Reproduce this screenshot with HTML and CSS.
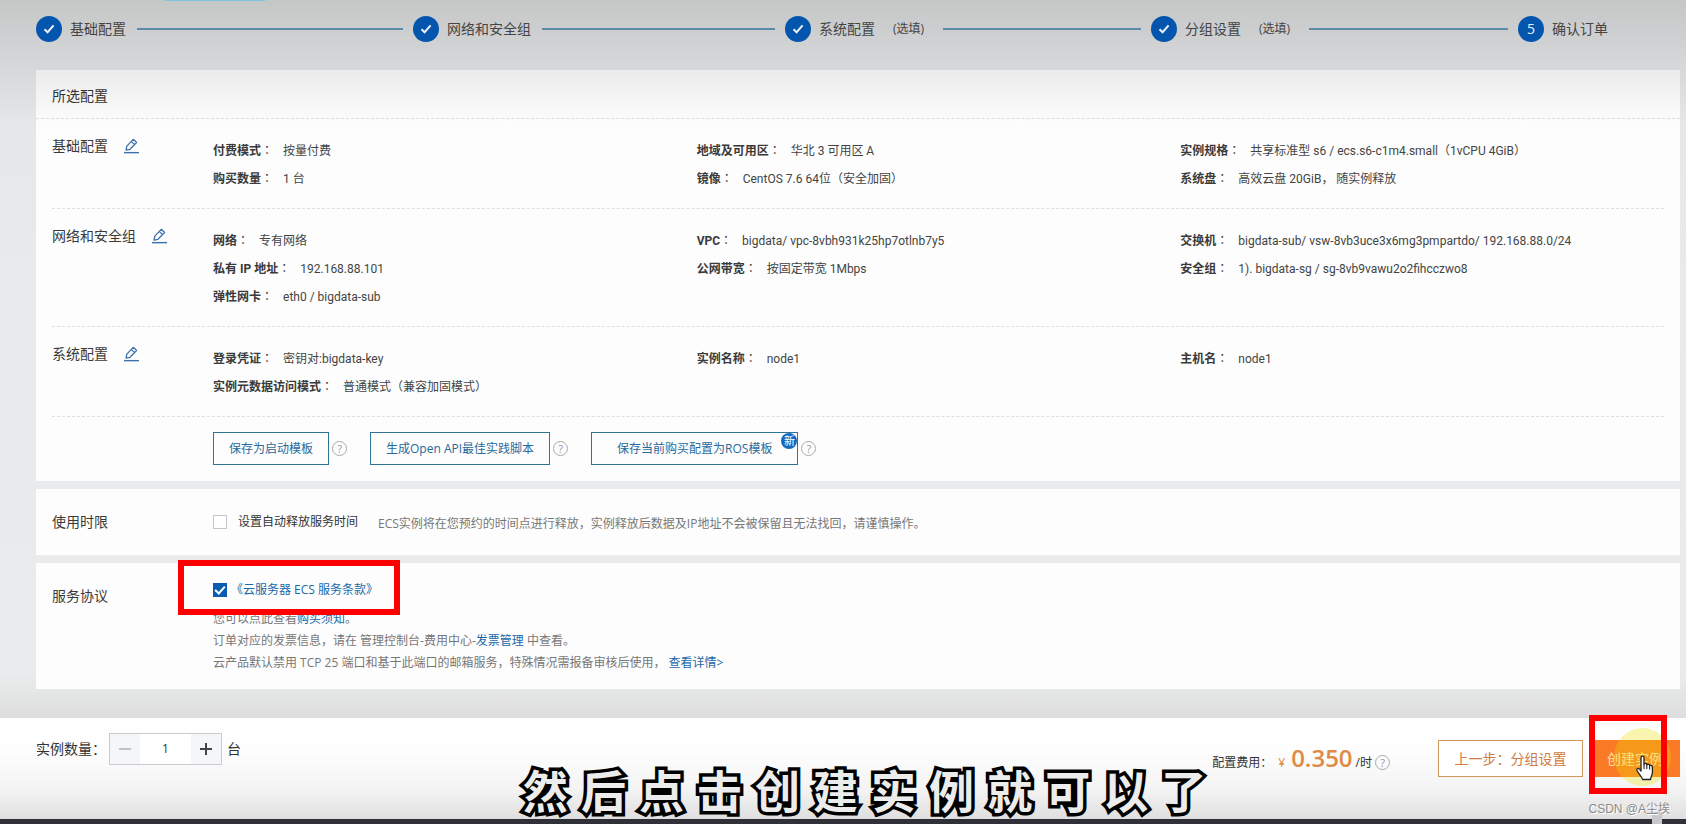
FILE: index.html
```html
<!DOCTYPE html>
<html lang="zh-CN">
<head>
<meta charset="utf-8">
<meta name="viewport" content="width=device-width, initial-scale=1">
<title>确认订单</title>
<link rel="stylesheet" href="styles.css">
</head>
<body>
<svg class="sprite" aria-hidden="true">
  <symbol id="check" viewBox="0 0 12 12"><path d="M1.5 6.2 4.6 9.2 10.6 2.4" fill="none" stroke="currentColor" stroke-width="2"/></symbol>
  <symbol id="pen" viewBox="0 0 16 17"><path d="M2.2 12.8 3 8.6 9.9 1.4 13.4 4.8 6.4 12 2.2 12.8ZM7.8 3.6 11.2 7" fill="none" stroke="currentColor" stroke-width="1.4" stroke-linejoin="round"/><path d="M0 15.6H16" stroke="currentColor" stroke-width="1.5"/></symbol>
</svg>
<div class="tab-edge"></div>

<ol class="steps">
  <li class="step"><span class="dot"><svg class="check"><use href="#check"/></svg></span><span class="step-name">基础配置</span><span class="rail"></span></li>
  <li class="step"><span class="dot"><svg class="check"><use href="#check"/></svg></span><span class="step-name">网络和安全组</span><span class="rail"></span></li>
  <li class="step"><span class="dot"><svg class="check"><use href="#check"/></svg></span><span class="step-name">系统配置</span><span class="optional">(选填)</span><span class="rail"></span></li>
  <li class="step"><span class="dot"><svg class="check"><use href="#check"/></svg></span><span class="step-name">分组设置</span><span class="optional">(选填)</span><span class="rail"></span></li>
  <li class="step"><span class="dot">5</span><span class="step-name">确认订单</span></li>
</ol>

<main class="panels">
  <section class="panel panel-config">
    <h1 class="panel-title">所选配置</h1>
    <div class="panel-body">
      <div class="row">
        <h2 class="row-name">基础配置<button class="edit" type="button" aria-label="编辑基础配置"><svg class="pen"><use href="#pen"/></svg></button></h2>
        <dl class="facts">
          <div class="fact"><dt>付费模式<span class="colon" lang="zh-TW">：</span></dt><dd>按量付费</dd></div>
          <div class="fact"><dt>地域及可用区<span class="colon" lang="zh-TW">：</span></dt><dd>华北 3 可用区 A</dd></div>
          <div class="fact"><dt>实例规格<span class="colon" lang="zh-TW">：</span></dt><dd>共享标准型 s6 / ecs.s6-c1m4.small（1vCPU 4GiB）</dd></div>
          <div class="fact"><dt>购买数量<span class="colon" lang="zh-TW">：</span></dt><dd>1 台</dd></div>
          <div class="fact"><dt>镜像<span class="colon" lang="zh-TW">：</span></dt><dd>CentOS 7.6 64位（安全加固）</dd></div>
          <div class="fact"><dt>系统盘<span class="colon" lang="zh-TW">：</span></dt><dd>高效云盘 20GiB， 随实例释放</dd></div>
        </dl>
      </div>
      <div class="row">
        <h2 class="row-name">网络和安全组<button class="edit" type="button" aria-label="编辑网络和安全组"><svg class="pen"><use href="#pen"/></svg></button></h2>
        <dl class="facts">
          <div class="fact"><dt>网络<span class="colon" lang="zh-TW">：</span></dt><dd>专有网络</dd></div>
          <div class="fact"><dt>VPC<span class="colon" lang="zh-TW">：</span></dt><dd>bigdata/ vpc-8vbh931k25hp7otlnb7y5</dd></div>
          <div class="fact"><dt>交换机<span class="colon" lang="zh-TW">：</span></dt><dd>bigdata-sub/ vsw-8vb3uce3x6mg3pmpartdo/ 192.168.88.0/24</dd></div>
          <div class="fact"><dt>私有 IP 地址<span class="colon" lang="zh-TW">：</span></dt><dd>192.168.88.101</dd></div>
          <div class="fact"><dt>公网带宽<span class="colon" lang="zh-TW">：</span></dt><dd>按固定带宽 1Mbps</dd></div>
          <div class="fact"><dt>安全组<span class="colon" lang="zh-TW">：</span></dt><dd>1). bigdata-sg / sg-8vb9vawu2o2fihcczwo8</dd></div>
          <div class="fact"><dt>弹性网卡<span class="colon" lang="zh-TW">：</span></dt><dd>eth0 / bigdata-sub</dd></div>
        </dl>
      </div>
      <div class="row">
        <h2 class="row-name">系统配置<button class="edit" type="button" aria-label="编辑系统配置"><svg class="pen"><use href="#pen"/></svg></button></h2>
        <dl class="facts">
          <div class="fact"><dt>登录凭证<span class="colon" lang="zh-TW">：</span></dt><dd>密钥对:bigdata-key</dd></div>
          <div class="fact"><dt>实例名称<span class="colon" lang="zh-TW">：</span></dt><dd>node1</dd></div>
          <div class="fact"><dt>主机名<span class="colon" lang="zh-TW">：</span></dt><dd>node1</dd></div>
          <div class="fact"><dt>实例元数据访问模式<span class="colon" lang="zh-TW">：</span></dt><dd>普通模式（兼容加固模式）</dd></div>
        </dl>
      </div>
      <div class="actions">
        <div class="action"><button class="outline-btn" type="button">保存为启动模板</button><button class="help" type="button">?</button></div>
        <div class="action"><button class="outline-btn" type="button">生成Open API最佳实践脚本</button><button class="help" type="button">?</button></div>
        <div class="action"><button class="outline-btn outline-btn-wide" type="button">保存当前购买配置为ROS模板<span class="new">新</span></button><button class="help" type="button">?</button></div>
      </div>
    </div>
  </section>

  <section class="panel panel-time">
    <h2 class="row-name">使用时限</h2>
    <div class="time-line">
      <input class="tick" type="checkbox" id="auto-release">
      <label class="tick-label" for="auto-release">设置自动释放服务时间</label>
      <span class="hint">ECS实例将在您预约的时间点进行释放，实例释放后数据及IP地址不会被保留且无法找回，请谨慎操作。</span>
    </div>
  </section>

  <section class="panel panel-terms">
    <h2 class="row-name terms-name">服务协议</h2>
    <div class="terms">
      <div class="terms-line">
        <input class="tick" type="checkbox" id="agree" checked aria-label="云服务器 ECS 服务条款">
        <a href="#terms">《云服务器 ECS 服务条款》</a>
      </div>
      <p>您可以点此查看<a href="#notice">购买须知</a>。</p>
      <p>订单对应的发票信息，请在 管理控制台-费用中心-<a href="#invoice">发票管理</a> 中查看。</p>
      <p>云产品默认禁用 TCP 25 端口和基于此端口的邮箱服务，特殊情况需报备审核后使用， <a href="#detail">查看详情&gt;</a></p>
    </div>
    <div class="mark mark-terms"></div>
  </section>
</main>

<footer class="bar">
  <div class="quantity">
    <label for="count">实例数量：</label>
    <div class="stepper">
      <button class="minus" type="button" aria-label="减少"></button>
      <input id="count" type="text" value="1">
      <button class="plus" type="button" aria-label="增加"></button>
    </div>
    <span>台</span>
  </div>
  <div class="checkout">
    <div class="price"><span>配置费用：</span><span class="yen">¥</span><strong>0.350</strong><span class="per">/时</span><button class="help" type="button">?</button></div>
    <button class="prev" type="button">上一步：分组设置</button>
    <div class="create-wrap">
      <button class="create" type="button">创建实例</button>
      <div class="glow"></div>
      <div class="mark mark-create"></div>
      <svg class="cursor" viewBox="0 0 20 26"><path d="M6 2.8C6 .6 9 .6 9 2.8V9.5C9.200 8 11.700 8.100 11.800 9.900 12.300 8.700 14.500 9 14.600 10.700 15.300 9.700 17.400 10.200 17.400 12V17.500C17.400 20 16 21 15.500 24.500H7.500C7 21.500 3.700 19 2 15.500 1.200 13.600 3.300 12.600 4.500 14.100L6 16Z" fill="#fff" stroke="#222" stroke-width="1.300" stroke-linejoin="round"/><path d="M9 9.500V14M11.800 10V14M14.600 10.800V14.500" fill="none" stroke="#222" stroke-width="1.100"/></svg>
    </div>
  </div>
  <div class="caption"><span>然</span><span>后</span><span>点</span><span>击</span><span>创</span><span>建</span><span>实</span><span>例</span><span>就</span><span>可</span><span>以</span><span>了</span></div>
  <div class="player-thumb"></div>
  <div class="watermark">CSDN @A尘埃</div>
</footer>
</body>
</html>
```
FILE: styles.css
```css
* { box-sizing: border-box; }

body {
  margin: 0;
  min-height: 100vh;
  display: flex;
  flex-direction: column;
  position: relative;
  font: 12px/22px "Open Sans", "Noto Sans CJK SC", sans-serif;
  color: #444;
  background: linear-gradient(#c5c6c6 0, #d7d8da 70px, #e6e7e9 125px, #e9eaec 300px, #eaebec calc(100% - 150px), #dddedd calc(100% - 108px));
}

h1, h2, p, dl, dt, dd, ol { margin: 0; padding: 0; font-weight: 400; }
button, input { font: inherit; color: inherit; margin: 0; padding: 0; border: 0; background: none; }
a { color: #1a68a8; text-decoration: none; }

.sprite { position: absolute; width: 0; height: 0; }

.tab-edge {
  position: absolute;
  left: 165px;
  top: 0;
  width: 100px;
  height: 1px;
  background: #7ec3e0;
}

/* progress steps */
.steps {
  display: grid;
  grid-template-columns: 377fr 372fr 366fr 367fr auto;
  padding: 15px 78px 0 36px;
  height: 70px;
  align-items: start;
  list-style: none;
}
.step { display: flex; align-items: center; height: 27px; font-size: 14px; color: #444; }
.dot {
  display: flex;
  align-items: center;
  justify-content: center;
  width: 26px;
  height: 26px;
  border-radius: 50%;
  background: #0355ae;
  color: #eaf1fa;
}
.check { width: 12px; height: 12px; }
.step-name { margin-left: 8px; }
.optional { margin-left: 18px; margin-right: 8px; font-size: 12px; }
.rail { flex: 1; height: 2px; margin: 0 10px 0 11px; background: #5d8aa8; }

/* panels */
.panels { display: flex; flex-direction: column; gap: 8px; padding: 0 6px 29px 36px; }
.panel { background: #fdfdfd; }
.panel-config { background: linear-gradient(#ebebeb, #fdfdfd 55px); }
.panel-title {
  padding: 15px 16px 10px;
  height: 49px;
  font-size: 14px;
  color: #333;
  border-bottom: 1px dashed #dcdcdc;
}
.panel-body { padding: 0 16px; }
.row {
  display: flex;
  padding: 16px 0 15px;
  border-bottom: 1px dashed #dfdfdf;
}
.row-name {
  flex: none;
  display: flex;
  align-items: center;
  width: 161px;
  height: 22px;
  font-size: 14px;
  color: #3a3a3a;
}
.edit { display: flex; margin-left: 16px; color: #3e70ae; }
.pen { width: 15px; height: 16px; }
.facts {
  flex: 1;
  display: grid;
  grid-template-columns: repeat(3, 1fr);
  grid-auto-rows: 28px;
  padding-top: 2px;
  line-height: 28px;
  font-family: Roboto, "Noto Sans CJK SC", sans-serif;
}
.fact { display: flex; gap: 10px; white-space: nowrap; }
.fact dt { font-weight: 700; color: #3a3a3a; }
.colon { font-family: "Noto Sans CJK TC", sans-serif; font-weight: 400; line-height: 12px; }

.actions { display: flex; gap: 23px; padding: 15px 0 16px 161px; }
.action { display: flex; align-items: center; gap: 3px; }
.outline-btn {
  position: relative;
  height: 33px;
  padding: 0 15px;
  border: 1px solid #2f7396;
  color: #27699b;
}
.outline-btn-wide { padding: 0 25px; }
.new {
  position: absolute;
  right: 0;
  top: 0;
  width: 16px;
  height: 16px;
  border-radius: 50%;
  background: #1468bd;
  color: #fff;
  font-size: 11px;
  line-height: 16px;
}
.help {
  flex: none;
  width: 15px;
  height: 15px;
  border: 1px solid #aaa;
  border-radius: 50%;
  color: #999;
  font-size: 11px;
  line-height: 13px;
}

.panel-time { display: flex; padding: 22px 16px; }
.time-line { display: flex; align-items: center; height: 22px; }
.tick {
  appearance: none;
  flex: none;
  display: flex;
  justify-content: center;
  width: 14px;
  height: 14px;
  border: 1px solid #c4c6cc;
  background: #fff;
}
.tick:checked { background: #0b5cb0; border-color: #0b5cb0; }
.tick:checked::after {
  content: "";
  width: 4px;
  height: 8px;
  border: solid #fff;
  border-width: 0 2px 2px 0;
  transform: rotate(42deg);
}
.tick-label { margin-left: 11px; color: #333; }
.hint { margin-left: 20px; padding-top: 3px; line-height: 20px; color: #777; }

.panel-terms { display: flex; position: relative; padding: 16px 16px 15px; }
.terms-name { margin-top: 6px; }
.terms { color: #777; }
.terms-line { display: flex; align-items: center; gap: 4px; margin-bottom: 7px; }

/* red annotation frames */
.mark { position: absolute; border: 6px solid #fe0000; }
.mark-terms { left: 142px; top: -3px; width: 222px; height: 55px; }
.mark-create { left: -1px; top: -25px; width: 78px; height: 79px; }

/* bottom bar */
.bar {
  position: relative;
  flex: 1;
  display: flex;
  justify-content: space-between;
  align-items: flex-start;
  min-height: 105px;
  padding: 15px 6px 0 36px;
  background: linear-gradient(#fefefe 30%, #f4f4f4 70%, #dfdfdf);
  border-bottom: 5px solid #303038;
}
.quantity { display: flex; align-items: center; font-size: 14px; color: #333; }
.stepper {
  display: flex;
  width: 113px;
  height: 32px;
  margin: 0 5px 0 3px;
  border: 1px solid #c9cbd0;
  background: #fff;
}
.stepper button { position: relative; width: 30px; background: #f4f6f8; }
.stepper input { flex: 1; min-width: 0; text-align: center; font-size: 12px; }
.stepper button::before, .plus::after {
  content: "";
  position: absolute;
  left: 9px;
  top: 14px;
  width: 12px;
  height: 2px;
  background: #444;
}
.stepper .minus::before { background: #c0c2c5; }
.plus::after { transform: rotate(90deg); }

.checkout { display: flex; align-items: flex-start; padding-top: 7px; }
.price { display: flex; align-items: baseline; height: 37px; line-height: 36px; margin-right: 48px; color: #333; }
.yen { margin-left: 6px; color: #e08a45; }
.price strong { margin: 0 3px 0 6px; font-size: 24px; font-weight: 600; color: #e08a45; }
.price .help { margin-left: 3px; }
.prev { width: 145px; height: 37px; margin-right: 7px; border: 1px solid #cf9a5c; color: #d07a40; font-size: 14px; background: #fff; }
.create-wrap { position: relative; width: 90px; }
.create { width: 100%; height: 37px; background: #fa7a26; color: #ffe2b0; font-size: 14px; }
.glow {
  position: absolute;
  left: 24px;
  top: -12px;
  width: 57px;
  height: 58px;
  border-radius: 50%;
  background: rgba(240, 225, 0, .3);
}
.cursor { position: absolute; left: 45px; top: 15px; width: 20px; height: 26px; }

.caption {
  position: absolute;
  left: 523px;
  bottom: 3px;
  display: flex;
  gap: 13px;
  color: #ececec;
  font: 700 45px/52px "Noto Sans CJK SC", sans-serif;
  -webkit-text-stroke: 7px #000;
  stroke-linejoin: round;
  paint-order: stroke fill;
  white-space: nowrap;
}
.watermark {
  position: absolute;
  right: 16px;
  bottom: 0;
  color: #8b8b8b;
  font: 12px/20px "Liberation Sans", "Noto Sans CJK SC", sans-serif;
  text-shadow: 1px 1px 0 #fff;
}
.player-thumb { position: absolute; right: 24px; bottom: -5px; width: 10px; height: 12px; background: #c8c8c8; }
```
